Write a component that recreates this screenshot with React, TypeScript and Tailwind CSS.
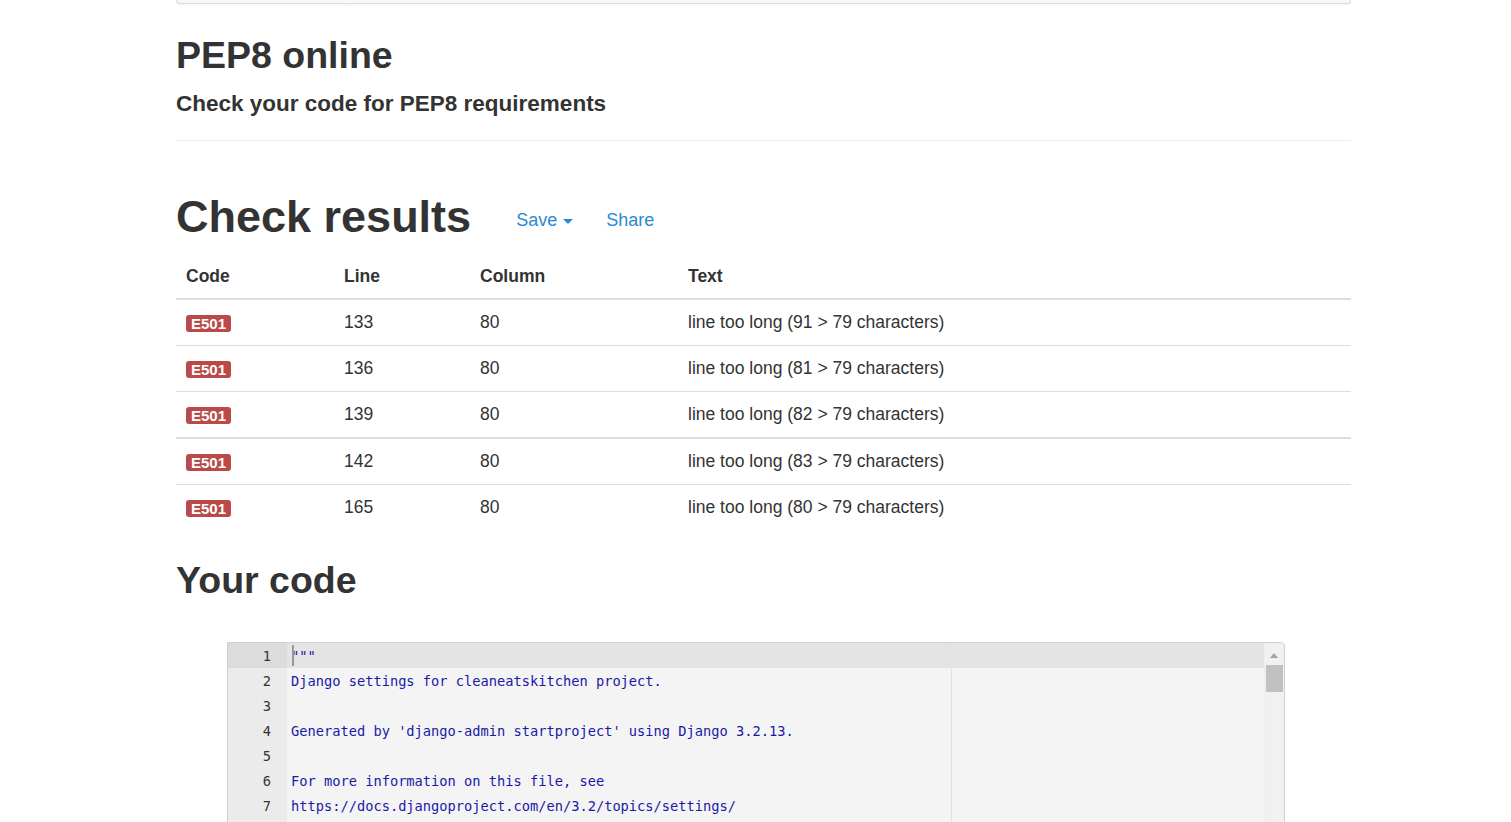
const rows = [
  { line: 133, col: 80, text: 'line too long (91 > 79 characters)' },
  { line: 136, col: 80, text: 'line too long (81 > 79 characters)' },
  { line: 139, col: 80, text: 'line too long (82 > 79 characters)' },
  { line: 142, col: 80, text: 'line too long (83 > 79 characters)' },
  { line: 165, col: 80, text: 'line too long (80 > 79 characters)' },
];

const codeLines = [
  '"""',
  'Django settings for cleaneatskitchen project.',
  '',
  "Generated by 'django-admin startproject' using Django 3.2.13.",
  '',
  'For more information on this file, see',
  'https://docs.djangoproject.com/en/3.2/topics/settings/',
  '',
  'For the full list of settings and their values, see',
  'https://docs.djangoproject.com/en/3.2/ref/settings/',
  '"""',
];

const sans = { fontFamily: '"Liberation Sans", Arial, sans-serif' };

const App = () => {
  return (
    <div className="min-h-screen bg-white text-[#333]" style={sans}>
      <div className="ml-[176px] w-[1175px]">
        {/* navbar remnant */}
        <div className="relative h-[4px] rounded-b-[4px] border-x border-b border-[#dcdcdc] bg-[#f8f8f8] shadow-[0_1px_2px_rgba(0,0,0,0.06)]">
          <div className="absolute left-[169px] top-0 h-full w-px bg-white" />
        </div>

        <h1 className="mt-[29px] text-[37.5px] font-bold leading-[44px]">PEP8 online</h1>
        <h2 className="mt-[14px] text-[22.5px] font-bold leading-[26px]">Check your code for PEP8 requirements</h2>
        <hr className="mt-[23px] border-t border-[#eee]" />

        <div className="mt-[51px] flex items-start">
          <h1 className="text-[45px] font-bold leading-[50px]">Check results</h1>
          <a className="ml-[45px] mt-[18px] flex items-center text-[18px] leading-[20px] text-[#2b8ad2]">
            Save
            <span className="ml-[6px] mt-[2px] inline-block h-0 w-0 border-x-[5px] border-t-[5px] border-x-transparent border-t-[#2b8ad2]" />
          </a>
          <a className="ml-[33px] mt-[18px] text-[18px] leading-[20px] text-[#2b8ad2]">Share</a>
        </div>

        <table className="mt-[16px] w-full border-collapse text-[17.5px] leading-[25px]">
          <thead>
            <tr className="border-b-2 border-[#ddd] text-left">
              <th className="w-[158px] pb-[9px] pl-[10px] pt-[6px] font-bold">Code</th>
              <th className="w-[136px] pb-[9px] pl-[10px] pt-[6px] font-bold">Line</th>
              <th className="w-[208px] pb-[9px] pl-[10px] pt-[6px] font-bold">Column</th>
              <th className="pb-[9px] pl-[10px] pt-[6px] font-bold">Text</th>
            </tr>
          </thead>
          <tbody>
            {rows.map((r, i) => (
              <tr
                key={r.line}
                className={
                  i === 2
                    ? 'border-b-2 border-[#ddd]'
                    : i === rows.length - 1
                      ? ''
                      : 'border-b border-[#ddd]'
                }
              >
                <td className="py-[10px] pl-[10px]">
                  <div className="flex h-[25px] items-center pt-[2px]">
                    <span className="rounded-[3px] bg-[#b94a48] px-[5px] text-[15px] font-bold leading-[17px] text-white">
                      E501
                    </span>
                  </div>
                </td>
                <td className="py-[10px] pl-[10px]">{r.line}</td>
                <td className="py-[10px] pl-[10px]">{r.col}</td>
                <td className="py-[10px] pl-[10px]">{r.text}</td>
              </tr>
            ))}
          </tbody>
        </table>

        <h1 className="mt-[30px] text-[37.5px] font-bold leading-[40px]">Your code</h1>

        {/* code editor */}
        <div className="ml-[51px] mt-[42px] flex w-[1058px] overflow-hidden rounded-tr-[4px] border border-[#cfcfcf] bg-[#f4f4f4]">
          <div
            className="flex-1"
            style={{ fontFamily: '"DejaVu Sans Mono", "Liberation Mono", monospace' }}
          >
            {codeLines.map((l, i) => (
              <div key={i} className={`flex h-[25px] text-[13.7px] ${i === 0 ? 'bg-[#e4e4e4]' : ''}`}>
                <div className={`h-full w-[59px] pr-[16px] pt-[1px] text-right leading-[25px] text-[#333] ${i === 0 ? 'bg-[#dcdcdc]' : 'bg-[#ebebeb]'}`}>
                  {i + 1}
                </div>
                <div className="relative h-full flex-1 pl-[4px] pt-[1px] leading-[25px] text-[#1a1aa6]">
                  {i === 0 && <span className="absolute left-[5px] top-[2px] h-[21px] w-[2px] bg-[#999]" />}
                  <span className="whitespace-pre">{l}</span>
                  <span className="absolute left-[664px] top-0 h-full w-px bg-[#e2e2e2]" />
                </div>
              </div>
            ))}
          </div>
          <div className="relative w-[20px] border-l border-[#eee] bg-[#f1f1f1]">
            <span className="absolute left-[5px] top-[10px] h-0 w-0 border-x-[4px] border-b-[5px] border-x-transparent border-b-[#a3a3a3]" />
            <div className="absolute left-[1px] top-[22px] h-[27px] w-[17px] bg-[#c1c1c1]" />
          </div>
        </div>
      </div>
    </div>
  );
};

export default App;
